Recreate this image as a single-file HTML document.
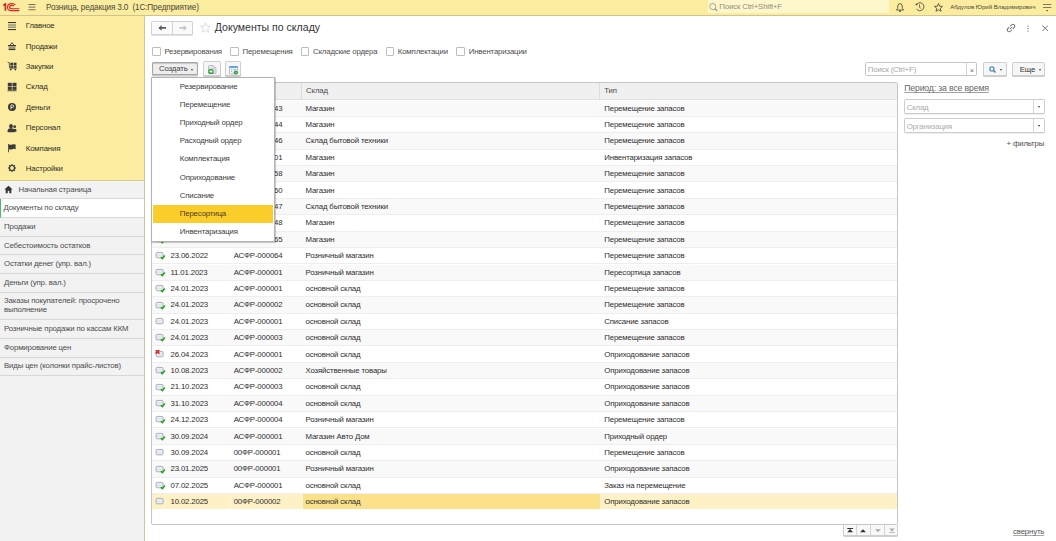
<!DOCTYPE html>
<html><head><meta charset="utf-8"><style>
*{box-sizing:border-box;margin:0;padding:0}
html,body{width:1056px;height:541px;overflow:hidden;background:#fff;font-family:"Liberation Sans",sans-serif;color:#2e2e2e;font-size:7.8px;letter-spacing:-0.15px}
.abs{position:absolute}
#hdr{position:absolute;left:0;top:0;width:1056px;height:16px;background:#FBEC9F;border-bottom:1px solid #CFC58C}
#logo{position:absolute;left:3px;top:3px}
#burger{position:absolute;left:28px;top:4px;width:8px;height:7px}
#apptitle{position:absolute;left:46px;top:2.7px;font-size:8.2px;color:#4a4a3a;white-space:pre}
#hsearch{position:absolute;left:708px;top:0;width:180.5px;height:13px;background:#FDF7CB}
#hsearch span{position:absolute;left:11.3px;top:1.8px;color:#8f8e80}
#user{position:absolute;left:950.3px;top:4.3px;font-size:6.05px;letter-spacing:0;-webkit-text-stroke:0;color:#4a4a3a;white-space:nowrap}
#side{position:absolute;left:0;top:16px;width:145px;height:525px;background:#F2F2F2;border-right:1px solid #CBC5A2}
#secs{position:absolute;left:0;top:0;width:144px;height:164.7px;background:#FBEC9F;border-bottom:1px solid #D3CA92;box-shadow:0 0.8px 0 #F7F7F7;z-index:2}
.sec{position:absolute;left:0;width:144px;height:12px;color:#2e2e2a}
.sec span{position:absolute;left:25.8px;top:1.6px;white-space:nowrap}
.si{position:absolute;left:7.7px;top:2px}
#tabs{position:absolute;left:0;top:0}
.tab{position:absolute;left:0;width:144px;border-bottom:1px solid #D8D8D8;background:#F2F2F2;color:#4d4d4d}
.tab span{position:absolute;left:4px;top:50%;margin-top:-5px;white-space:nowrap;line-height:9px}
.tab.two span{margin-top:-9px;line-height:8.9px}
.tab.act{background:#fff;border-left:1.5px solid #4CB86A}
.tab.act span{left:2.5px}
.tab.home span{left:18.5px;margin-top:-4.4px}
.homei{position:absolute;left:3.6px;top:4.6px}
#content{position:absolute;left:145px;top:16px;width:911px;height:525px;background:#fff}
#navbtn{position:absolute;left:151.4px;top:21px;width:41.6px;height:13.6px;border:1px solid #D2D2D2;border-radius:1.5px;background:#FAFAFA;box-shadow:0 0.6px 0 #C8C8C8}
#navbtn i{position:absolute;left:20px;top:0;width:1px;height:100%;background:#D2D2D2}
#title{position:absolute;left:214.8px;top:21.2px;letter-spacing:0;font-size:10.56px;color:#333;white-space:nowrap}
.chk{position:absolute;top:47.2px;height:9px;white-space:nowrap}
.chk i{position:absolute;left:0;top:0;width:8.6px;height:8.6px;border:1px solid #BDBDBD;border-radius:1px;background:#fff}
.chk span{position:absolute;left:12.3px;top:-0.3px;color:#4d4d4d}
.btn{position:absolute;border:1px solid #CFCFCF;border-radius:1.5px;background:#F6F6F6;box-shadow:0 0.7px 0 #BDBDBD}
#create{left:151.8px;top:61.6px;width:46.6px;height:13.4px;background:#EEEEEE;border:1.3px solid #A6A6A6;border-radius:1px;box-shadow:inset 0 0.8px 1px #bbb,0 1.6px 0.6px #CBCBCB}
#create span{position:absolute;left:6.2px;top:1px;color:#444}
.caret{position:absolute;width:0;height:0;border-left:1.9px solid transparent;border-right:1.9px solid transparent;border-top:2.1px solid #444}
#tbl{position:absolute;left:151px;top:82px;width:747px;height:442.5px;border:1px solid #C6C6C6;border-radius:1.5px;background:#fff;overflow:hidden}
#thead{position:absolute;left:0;top:0;width:100%;height:16.5px;background:#F0F0F0;border-bottom:1px solid #DEDEDE}
#thead div{position:absolute;top:0;height:16px;border-right:1px solid #DCDCDC}
#thead span{position:absolute;top:3.3px;color:#4d4d4d}
.r{position:absolute;left:0;width:100%;height:16.4px;background:#fff;border-bottom:1px solid #EEEEEE}
.r.odd{background:#F9F9F9}
.r > div{position:absolute;top:0;height:100%;white-space:nowrap}
.r span.dt{position:absolute;left:18.5px;top:3px}
.c0{left:0;width:77.5px}
.c1{left:77.5px;width:72px;padding-left:4.2px;padding-top:3px}
.c2{left:149.5px;width:298px;padding-left:4px;padding-top:3px}
.c3{left:447.5px;width:298px;padding-left:4.8px;padding-top:3px}
.di{position:absolute;left:3px;top:3.3px}
.r.sel{background:#FEF1C6;border-bottom-color:#fff}
.r.sel .c2{background:#FBE18A;border-left:1px solid #FFF7DF;padding-left:3px}
.r.sel .c1{border-left:1px solid #FFF8E0;padding-left:3.2px}
#menu{position:absolute;left:151.4px;top:76.8px;width:123.2px;height:165.2px;background:#fff;border:1px solid #B4B4B4;border-radius:1px;box-shadow:0.6px 0.8px 1px rgba(0,0,0,0.22)}
.mi{position:absolute;left:0;width:121px;height:18px;padding-left:27.4px;padding-top:3.3px;color:#404040;white-space:nowrap}
.mi.hl{background:#FACD2B;left:0.6px;width:120.2px;padding-left:26.8px;color:#4a4020}
#srch{position:absolute;left:865.2px;top:62px;width:112px;height:14.3px;border:1px solid #C6C6C6;border-radius:1.5px;background:#fff}
#srch span{position:absolute;left:1.6px;top:2.2px;color:#A8A8A8}
#srch i{position:absolute;left:99.6px;top:0;width:1px;height:100%;background:#D6D6D6}
#srch b{position:absolute;left:103.6px;top:2.6px;font-weight:normal;color:#666;font-size:7.4px}
#period{position:absolute;left:904.2px;top:83.4px;font-size:8.7px;color:#666;-webkit-text-stroke:0;text-decoration:underline;text-decoration-color:#a0a0a0;white-space:nowrap}
.fld{position:absolute;left:903.9px;width:141.3px;height:14px;border:1px solid #CCCCCC;border-radius:1.5px;background:#fff;box-shadow:0 0.5px 0 #E0E0E0}
.fld span{position:absolute;left:1.8px;top:2.4px;color:#ABABAB}
.fld i{position:absolute;left:127.8px;top:0;width:1px;height:100%;background:#D6D6D6}
#morefil{position:absolute;left:1006.5px;top:139px;color:#4d4d4d;white-space:nowrap}
#pager{position:absolute;left:843.3px;top:525px;width:54.7px;height:11.3px;border:1px solid #CFCFCF;border-top:none;border-radius:0 0 1.5px 1.5px;background:#F8F8F8;box-shadow:0 0.7px 0 #C4C4C4}
#pager i{position:absolute;top:0;width:1px;height:100%;background:#D4D4D4}
#collapse{position:absolute;left:1013px;top:527.3px;color:#555;-webkit-text-stroke:0;text-decoration:underline;text-decoration-color:#aaa;white-space:nowrap}
</style></head><body>
<div id="hdr">
  <svg id="logo" width="17" height="9" viewBox="0 0 17 9">
    <path d="M0.3 2.6 L2.4 0.8 L2.4 7.7" fill="none" stroke="#D8262B" stroke-width="1.7"/>
    <path d="M12.4 2 Q11.4 0.6 8.8 0.6 Q4.5 0.6 4.5 4.2 Q4.5 7.6 8.8 7.6 L16.3 7.6" fill="none" stroke="#D8262B" stroke-width="1.1"/>
    <path d="M10.8 3.1 Q10.3 2.4 8.9 2.4 Q6.5 2.4 6.5 4.1 Q6.5 5.8 8.9 5.8 L16.3 5.8" fill="none" stroke="#D8262B" stroke-width="1.1"/>
  </svg>
  <svg id="burger" width="8" height="8" viewBox="0 0 8 8"><rect x="0" y="0" width="8" height="1.1" fill="#6f6c58"/><rect x="0" y="3" width="8" height="1.1" fill="#6f6c58"/><rect x="0" y="6" width="8" height="1.1" fill="#6f6c58"/></svg>
  <div id="apptitle">Розница, редакция 3.0  (1С:Предприятие)</div>
  <div id="hsearch"><svg style="position:absolute;left:1px;top:3px" width="9" height="9" viewBox="0 0 9 9"><circle cx="3.8" cy="3.6" r="3.1" fill="none" stroke="#8f8e80" stroke-width="0.8"/><path d="M6 5.9 L8.3 8" stroke="#8f8e80" stroke-width="1.1"/></svg><span>Поиск Ctrl+Shift+F</span></div>
  <svg class="abs" style="left:896px;top:2.8px" width="8" height="9" viewBox="0 0 8 9"><path d="M4 0.6 Q2 0.6 1.8 3 L1.6 5.6 L0.4 7 L7.6 7 L6.4 5.6 L6.2 3 Q6 0.6 4 0.6 Z" fill="none" stroke="#3f3f35" stroke-width="0.8"/><rect x="3" y="7.5" width="2" height="1.2" fill="#3f3f35"/></svg>
  <svg class="abs" style="left:915px;top:2.3px" width="10" height="10" viewBox="0 0 10 10"><path d="M1.3 3 A4 4 0 1 1 1.6 7" fill="none" stroke="#3f3f35" stroke-width="0.8"/><path d="M0.2 2 L2.4 1.6 L1.9 3.8 Z" fill="#3f3f35"/><path d="M4.5 2.6 L4.6 5.2 L6 6.6" fill="none" stroke="#3f3f35" stroke-width="0.8"/></svg>
  <svg class="abs" style="left:934px;top:2.6px" width="9" height="9" viewBox="0 0 9 9"><path d="M4.5 0.5 L5.6 3.2 L8.5 3.4 L6.3 5.3 L7 8.3 L4.5 6.7 L2 8.3 L2.7 5.3 L0.5 3.4 L3.4 3.2 Z" fill="none" stroke="#3f3f35" stroke-width="0.8" stroke-linejoin="round"/></svg>
  <div id="user">Абдулов Юрий Владимирович</div>
  <svg class="abs" style="left:1042.8px;top:3.5px" width="9" height="8" viewBox="0 0 9 8"><rect x="0" y="0" width="8.3" height="1" fill="#7d7a60"/><rect x="0" y="3" width="8.3" height="1" fill="#7d7a60"/><path d="M3 6 L5.2 6 L4.1 7.2 Z" fill="#333"/></svg>
</div>
<div id="side">
  <div id="secs"><div class="sec" style="top:3.6px"><svg class="si" width="8" height="8" viewBox="0 0 8 8" overflow="visible"><rect x="0" y="0" width="8" height="1.1" fill="#3a3a3c"/><rect x="0" y="2.2" width="8" height="1.6" fill="#9B9A7C"/><rect x="0" y="4.4" width="8" height="1.6" fill="#9B9A7C"/><rect x="0" y="7" width="8" height="1.1" fill="#3a3a3c"/></svg><span>Главное</span></div><div class="sec" style="top:24.0px"><svg class="si" width="8" height="8" viewBox="0 0 8 8" overflow="visible"><path d="M2.2 3 L4 0.6 L5.8 3" fill="none" stroke="#3a3a3c" stroke-width="0.9"/><rect x="0" y="3" width="8" height="1.3" fill="#3a3a3c"/><rect x="0.6" y="4.3" width="6.8" height="2.6" fill="#9B9A7C"/><rect x="0.6" y="6.9" width="6.8" height="1.2" fill="#3a3a3c"/></svg><span>Продажи</span></div><div class="sec" style="top:44.4px"><svg class="si" width="8" height="8" viewBox="0 0 8 8" overflow="visible"><path d="M-0.4 0.2 L1.2 0.7 L1.6 6.2 L8.6 6.2" fill="none" stroke="#3a3a3c" stroke-width="0.8"/><rect x="2.3" y="0.7" width="2.8" height="2.4" fill="#3a3a3c"/><rect x="5.7" y="0.7" width="2.8" height="2.4" fill="#3a3a3c"/><rect x="2.3" y="3.5" width="2.8" height="2.3" fill="#3a3a3c"/><rect x="5.7" y="3.5" width="2.8" height="2.3" fill="#3a3a3c"/><circle cx="2.8" cy="7.6" r="0.9" fill="#3a3a3c"/><circle cx="7.4" cy="7.6" r="0.9" fill="#3a3a3c"/></svg><span>Закупки</span></div><div class="sec" style="top:64.8px"><svg class="si" width="8" height="8" viewBox="0 0 8 8" overflow="visible"><rect x="-0.2" y="-0.2" width="4" height="3.4" fill="#3a3a3c"/><rect x="4.5" y="-0.2" width="4" height="3.4" fill="#3a3a3c"/><rect x="-0.2" y="3.7" width="4" height="3.2" fill="#3a3a3c"/><rect x="4.5" y="3.7" width="4" height="3.2" fill="#3a3a3c"/><rect x="-0.4" y="7.3" width="8.9" height="0.9" fill="#3a3a3c"/></svg><span>Склад</span></div><div class="sec" style="top:85.2px"><svg class="si" width="8" height="8" viewBox="0 0 8 8" overflow="visible"><circle cx="4" cy="4" r="4" fill="#3a3a3c"/><path d="M3 6.2 L3 2 L4.6 2 Q5.8 2 5.8 3.2 Q5.8 4.4 4.6 4.4 L3 4.4" fill="none" stroke="#E8E4CC" stroke-width="1"/></svg><span>Деньги</span></div><div class="sec" style="top:105.6px"><svg class="si" width="8" height="8" viewBox="0 0 8 8" overflow="visible"><circle cx="6.7" cy="2.7" r="1.4" fill="#3a3a3c"/><path d="M5.2 8.1 L5.2 5.4 Q6.7 4.2 8.4 5.4 L8.4 7.8 Z" fill="#3a3a3c"/><ellipse cx="3" cy="2.2" rx="1.8" ry="2.2" fill="#3a3a3c"/><path d="M-0.4 8.2 L-0.4 6.6 Q-0.4 4.8 1.8 4.2 L4.2 4.2 Q6.4 4.8 6.4 6.6 L6.4 8.2 Z" fill="#3a3a3c"/></svg><span>Персонал</span></div><div class="sec" style="top:126.0px"><svg class="si" width="8" height="8" viewBox="0 0 8 8" overflow="visible"><rect x="0" y="0" width="1" height="8.2" fill="#55554a"/><path d="M1 0.4 Q2.6 1.2 4.2 0.5 Q5.8 -0.2 7.6 0.6 L7.6 5.2 Q6 4.5 4.2 5.2 Q2.6 5.9 1 5.2 Z" fill="#3a3a3c"/></svg><span>Компания</span></div><div class="sec" style="top:146.2px"><svg class="si" width="8" height="8" viewBox="0 0 8 8" overflow="visible"><g transform="translate(4 4)"><circle r="2.5" fill="none" stroke="#3a3a3c" stroke-width="1.2"/><rect x="-0.6" y="-4.1" width="1.2" height="1.8" fill="#3a3a3c" transform="rotate(0)"/><rect x="-0.6" y="-4.1" width="1.2" height="1.8" fill="#3a3a3c" transform="rotate(45)"/><rect x="-0.6" y="-4.1" width="1.2" height="1.8" fill="#3a3a3c" transform="rotate(90)"/><rect x="-0.6" y="-4.1" width="1.2" height="1.8" fill="#3a3a3c" transform="rotate(135)"/><rect x="-0.6" y="-4.1" width="1.2" height="1.8" fill="#3a3a3c" transform="rotate(180)"/><rect x="-0.6" y="-4.1" width="1.2" height="1.8" fill="#3a3a3c" transform="rotate(225)"/><rect x="-0.6" y="-4.1" width="1.2" height="1.8" fill="#3a3a3c" transform="rotate(270)"/><rect x="-0.6" y="-4.1" width="1.2" height="1.8" fill="#3a3a3c" transform="rotate(315)"/></g></svg><span>Настройки</span></div></div>
  <div id="tabs"><div class="tab home" style="top:164.00px;height:19.30px"><svg class="homei" width="9" height="9" viewBox="0 0 9 9"><path d="M4.5 0.8 L8.6 4.6 L7.3 4.6 L7.3 8.2 L5.3 8.2 L5.3 5.8 L3.7 5.8 L3.7 8.2 L1.7 8.2 L1.7 4.6 L0.4 4.6 Z" fill="#333"/></svg><span>Начальная страница</span></div><div class="tab act" style="top:183.30px;height:18.90px"><span>Документы по складу</span></div><div class="tab" style="top:202.20px;height:18.60px"><span>Продажи</span></div><div class="tab" style="top:220.80px;height:18.70px"><span>Себестоимость остатков</span></div><div class="tab" style="top:239.50px;height:18.80px"><span>Остатки денег (упр. вал.)</span></div><div class="tab" style="top:258.30px;height:18.80px"><span>Деньги (упр. вал.)</span></div><div class="tab two" style="top:277.10px;height:26.80px"><span>Заказы покупателей: просрочено<br>выполнение</span></div><div class="tab" style="top:303.90px;height:19.10px"><span>Розничные продажи по кассам ККМ</span></div><div class="tab" style="top:323.00px;height:18.60px"><span>Формирование цен</span></div><div class="tab" style="top:341.60px;height:18.60px"><span>Виды цен (колонки прайс-листов)</span></div></div>
</div>
<div id="content"></div>
<div id="navbtn"><i></i>
  <svg class="abs" style="left:5.5px;top:3px" width="9" height="7" viewBox="0 0 9 7"><path d="M0.3 2.9 L3.6 0.1 L3.6 2 L8.1 2 L8.1 3.8 L3.6 3.8 L3.6 5.7 Z" fill="#5a5a5a"/></svg>
  <svg class="abs" style="left:26.6px;top:3px" width="9" height="7" viewBox="0 0 9 7"><path d="M7.9 2.9 L4.6 0.1 L4.6 2 L0.2 2 L0.2 3.8 L4.6 3.8 L4.6 5.7 Z" fill="#C4C4C4"/></svg>
</div>
<svg class="abs" style="left:199.6px;top:22.4px" width="11" height="11" viewBox="0 0 11 11"><path d="M5.5 0.6 L6.8 4 L10.4 4.2 L7.7 6.6 L8.6 10.3 L5.5 8.2 L2.4 10.3 L3.3 6.6 L0.6 4.2 L4.2 4 Z" fill="none" stroke="#D6D6D6" stroke-width="0.8" stroke-linejoin="round"/></svg>
<div id="title">Документы по складу</div>
<svg class="abs" style="left:1005.6px;top:22.8px" width="10" height="10" viewBox="0 0 10 10"><g fill="none" stroke="#6e6e6e" stroke-width="0.95" stroke-linecap="round"><path transform="translate(6.6 3.4) rotate(45)" d="M-1.8 1.3 L-1.8 -0.5 A1.8 1.8 0 0 1 1.8 -0.5 L1.8 1.3"/><path transform="translate(3.4 6.6) rotate(45)" d="M-1.8 -1.3 L-1.8 0.5 A1.8 1.8 0 0 0 1.8 0.5 L1.8 -1.3"/><path d="M4.1 5.9 L5.9 4.1"/></g></svg>
<svg class="abs" style="left:1026.5px;top:24.6px" width="2" height="7" viewBox="0 0 2 7"><circle cx="1" cy="1" r="0.62" fill="#444"/><circle cx="1" cy="3.5" r="0.62" fill="#444"/><circle cx="1" cy="6" r="0.62" fill="#444"/></svg>
<svg class="abs" style="left:1041.7px;top:24.6px" width="6.5" height="6.5" viewBox="0 0 6.5 6.5"><path d="M0.3 0.3 L6.2 6.2 M6.2 0.3 L0.3 6.2" stroke="#555" stroke-width="0.8"/></svg>
<div class="chk" style="left:152.1px"><i></i><span>Резервирования</span></div><div class="chk" style="left:230.2px"><i></i><span>Перемещения</span></div><div class="chk" style="left:300.7px"><i></i><span>Складские ордера</span></div><div class="chk" style="left:385.5px"><i></i><span>Комплектации</span></div><div class="chk" style="left:456.4px"><i></i><span>Инвентаризации</span></div>
<div id="tbl">
  <div id="thead">
    <div style="left:0;width:77.5px"></div>
    <div style="left:77.5px;width:72px"></div>
    <div style="left:149.5px;width:298px"><span style="left:4.6px">Склад</span></div>
    <div style="left:447.5px;width:298px;border-right:none"><span style="left:4.8px">Тип</span></div>
  </div>
  <div class="r odd" style="top:17.50px"><div class="c0"><svg class="di" width="13" height="12" viewBox="0 0 13 12"><rect x="1.1" y="1.4" width="7" height="5.4" rx="1.1" fill="#E6E9EE" stroke="#A7AFBC" stroke-width="1"/><rect x="2.4" y="2.6" width="4.4" height="3" fill="#F2F4F7"/><line x1="2.6" y1="4.1" x2="6.6" y2="4.1" stroke="#C3C9D3" stroke-width="0.6"/><path d="M5.9 6.2 L7.4 7.6 L9.9 4.6" fill="none" stroke="#27A427" stroke-width="1.6"/></svg><span class="dt">10.06.2022</span></div><div class="c1">АСФР-000043</div><div class="c2">Магазин</div><div class="c3">Перемещение запасов</div></div><div class="r" style="top:33.90px"><div class="c0"><svg class="di" width="13" height="12" viewBox="0 0 13 12"><rect x="1.1" y="1.4" width="7" height="5.4" rx="1.1" fill="#E6E9EE" stroke="#A7AFBC" stroke-width="1"/><rect x="2.4" y="2.6" width="4.4" height="3" fill="#F2F4F7"/><line x1="2.6" y1="4.1" x2="6.6" y2="4.1" stroke="#C3C9D3" stroke-width="0.6"/><path d="M5.9 6.2 L7.4 7.6 L9.9 4.6" fill="none" stroke="#27A427" stroke-width="1.6"/></svg><span class="dt">10.06.2022</span></div><div class="c1">АСФР-000044</div><div class="c2">Магазин</div><div class="c3">Перемещение запасов</div></div><div class="r odd" style="top:50.30px"><div class="c0"><svg class="di" width="13" height="12" viewBox="0 0 13 12"><rect x="1.1" y="1.4" width="7" height="5.4" rx="1.1" fill="#E6E9EE" stroke="#A7AFBC" stroke-width="1"/><rect x="2.4" y="2.6" width="4.4" height="3" fill="#F2F4F7"/><line x1="2.6" y1="4.1" x2="6.6" y2="4.1" stroke="#C3C9D3" stroke-width="0.6"/><path d="M5.9 6.2 L7.4 7.6 L9.9 4.6" fill="none" stroke="#27A427" stroke-width="1.6"/></svg><span class="dt">10.06.2022</span></div><div class="c1">АСФР-000046</div><div class="c2">Склад бытовой техники</div><div class="c3">Перемещение запасов</div></div><div class="r" style="top:66.70px"><div class="c0"><svg class="di" width="13" height="12" viewBox="0 0 13 12"><rect x="1.1" y="1.4" width="7" height="5.4" rx="1.1" fill="#E6E9EE" stroke="#A7AFBC" stroke-width="1"/><rect x="2.4" y="2.6" width="4.4" height="3" fill="#F2F4F7"/><line x1="2.6" y1="4.1" x2="6.6" y2="4.1" stroke="#C3C9D3" stroke-width="0.6"/><path d="M5.9 6.2 L7.4 7.6 L9.9 4.6" fill="none" stroke="#27A427" stroke-width="1.6"/></svg><span class="dt">10.06.2022</span></div><div class="c1">АСФР-000001</div><div class="c2">Магазин</div><div class="c3">Инвентаризация запасов</div></div><div class="r odd" style="top:83.10px"><div class="c0"><svg class="di" width="13" height="12" viewBox="0 0 13 12"><rect x="1.1" y="1.4" width="7" height="5.4" rx="1.1" fill="#E6E9EE" stroke="#A7AFBC" stroke-width="1"/><rect x="2.4" y="2.6" width="4.4" height="3" fill="#F2F4F7"/><line x1="2.6" y1="4.1" x2="6.6" y2="4.1" stroke="#C3C9D3" stroke-width="0.6"/><path d="M5.9 6.2 L7.4 7.6 L9.9 4.6" fill="none" stroke="#27A427" stroke-width="1.6"/></svg><span class="dt">10.06.2022</span></div><div class="c1">АСФР-000058</div><div class="c2">Магазин</div><div class="c3">Перемещение запасов</div></div><div class="r" style="top:99.50px"><div class="c0"><svg class="di" width="13" height="12" viewBox="0 0 13 12"><rect x="1.1" y="1.4" width="7" height="5.4" rx="1.1" fill="#E6E9EE" stroke="#A7AFBC" stroke-width="1"/><rect x="2.4" y="2.6" width="4.4" height="3" fill="#F2F4F7"/><line x1="2.6" y1="4.1" x2="6.6" y2="4.1" stroke="#C3C9D3" stroke-width="0.6"/><path d="M5.9 6.2 L7.4 7.6 L9.9 4.6" fill="none" stroke="#27A427" stroke-width="1.6"/></svg><span class="dt">10.06.2022</span></div><div class="c1">АСФР-000060</div><div class="c2">Магазин</div><div class="c3">Перемещение запасов</div></div><div class="r odd" style="top:115.90px"><div class="c0"><svg class="di" width="13" height="12" viewBox="0 0 13 12"><rect x="1.1" y="1.4" width="7" height="5.4" rx="1.1" fill="#E6E9EE" stroke="#A7AFBC" stroke-width="1"/><rect x="2.4" y="2.6" width="4.4" height="3" fill="#F2F4F7"/><line x1="2.6" y1="4.1" x2="6.6" y2="4.1" stroke="#C3C9D3" stroke-width="0.6"/><path d="M5.9 6.2 L7.4 7.6 L9.9 4.6" fill="none" stroke="#27A427" stroke-width="1.6"/></svg><span class="dt">10.06.2022</span></div><div class="c1">АСФР-000047</div><div class="c2">Склад бытовой техники</div><div class="c3">Перемещение запасов</div></div><div class="r" style="top:132.30px"><div class="c0"><svg class="di" width="13" height="12" viewBox="0 0 13 12"><rect x="1.1" y="1.4" width="7" height="5.4" rx="1.1" fill="#E6E9EE" stroke="#A7AFBC" stroke-width="1"/><rect x="2.4" y="2.6" width="4.4" height="3" fill="#F2F4F7"/><line x1="2.6" y1="4.1" x2="6.6" y2="4.1" stroke="#C3C9D3" stroke-width="0.6"/><path d="M5.9 6.2 L7.4 7.6 L9.9 4.6" fill="none" stroke="#27A427" stroke-width="1.6"/></svg><span class="dt">10.06.2022</span></div><div class="c1">АСФР-000048</div><div class="c2">Магазин</div><div class="c3">Перемещение запасов</div></div><div class="r odd" style="top:148.70px"><div class="c0"><svg class="di" width="13" height="12" viewBox="0 0 13 12"><rect x="1.1" y="1.4" width="7" height="5.4" rx="1.1" fill="#E6E9EE" stroke="#A7AFBC" stroke-width="1"/><rect x="2.4" y="2.6" width="4.4" height="3" fill="#F2F4F7"/><line x1="2.6" y1="4.1" x2="6.6" y2="4.1" stroke="#C3C9D3" stroke-width="0.6"/><path d="M5.9 6.2 L7.4 7.6 L9.9 4.6" fill="none" stroke="#27A427" stroke-width="1.6"/></svg><span class="dt">10.06.2022</span></div><div class="c1">АСФР-000065</div><div class="c2">Магазин</div><div class="c3">Перемещение запасов</div></div><div class="r" style="top:165.10px"><div class="c0"><svg class="di" width="13" height="12" viewBox="0 0 13 12"><rect x="1.1" y="1.4" width="7" height="5.4" rx="1.1" fill="#E6E9EE" stroke="#A7AFBC" stroke-width="1"/><rect x="2.4" y="2.6" width="4.4" height="3" fill="#F2F4F7"/><line x1="2.6" y1="4.1" x2="6.6" y2="4.1" stroke="#C3C9D3" stroke-width="0.6"/><path d="M5.9 6.2 L7.4 7.6 L9.9 4.6" fill="none" stroke="#27A427" stroke-width="1.6"/></svg><span class="dt">23.06.2022</span></div><div class="c1">АСФР-000064</div><div class="c2">Розничный магазин</div><div class="c3">Перемещение запасов</div></div><div class="r odd" style="top:181.50px"><div class="c0"><svg class="di" width="13" height="12" viewBox="0 0 13 12"><rect x="1.1" y="1.4" width="7" height="5.4" rx="1.1" fill="#E6E9EE" stroke="#A7AFBC" stroke-width="1"/><rect x="2.4" y="2.6" width="4.4" height="3" fill="#F2F4F7"/><line x1="2.6" y1="4.1" x2="6.6" y2="4.1" stroke="#C3C9D3" stroke-width="0.6"/><path d="M5.9 6.2 L7.4 7.6 L9.9 4.6" fill="none" stroke="#27A427" stroke-width="1.6"/></svg><span class="dt">11.01.2023</span></div><div class="c1">АСФР-000001</div><div class="c2">Розничный магазин</div><div class="c3">Пересортица запасов</div></div><div class="r" style="top:197.90px"><div class="c0"><svg class="di" width="13" height="12" viewBox="0 0 13 12"><rect x="1.1" y="1.4" width="7" height="5.4" rx="1.1" fill="#E6E9EE" stroke="#A7AFBC" stroke-width="1"/><rect x="2.4" y="2.6" width="4.4" height="3" fill="#F2F4F7"/><line x1="2.6" y1="4.1" x2="6.6" y2="4.1" stroke="#C3C9D3" stroke-width="0.6"/><path d="M5.9 6.2 L7.4 7.6 L9.9 4.6" fill="none" stroke="#27A427" stroke-width="1.6"/></svg><span class="dt">24.01.2023</span></div><div class="c1">АСФР-000001</div><div class="c2">основной склад</div><div class="c3">Перемещение запасов</div></div><div class="r odd" style="top:214.30px"><div class="c0"><svg class="di" width="13" height="12" viewBox="0 0 13 12"><rect x="1.1" y="1.4" width="7" height="5.4" rx="1.1" fill="#E6E9EE" stroke="#A7AFBC" stroke-width="1"/><rect x="2.4" y="2.6" width="4.4" height="3" fill="#F2F4F7"/><line x1="2.6" y1="4.1" x2="6.6" y2="4.1" stroke="#C3C9D3" stroke-width="0.6"/><path d="M5.9 6.2 L7.4 7.6 L9.9 4.6" fill="none" stroke="#27A427" stroke-width="1.6"/></svg><span class="dt">24.01.2023</span></div><div class="c1">АСФР-000002</div><div class="c2">основной склад</div><div class="c3">Перемещение запасов</div></div><div class="r" style="top:230.70px"><div class="c0"><svg class="di" width="13" height="12" viewBox="0 0 13 12"><rect x="1.1" y="1.4" width="7" height="5.4" rx="1.1" fill="#E6E9EE" stroke="#A7AFBC" stroke-width="1"/><rect x="2.4" y="2.6" width="4.4" height="3" fill="#F2F4F7"/><line x1="2.6" y1="4.1" x2="6.6" y2="4.1" stroke="#C3C9D3" stroke-width="0.6"/></svg><span class="dt">24.01.2023</span></div><div class="c1">АСФР-000001</div><div class="c2">основной склад</div><div class="c3">Списание запасов</div></div><div class="r odd" style="top:247.10px"><div class="c0"><svg class="di" width="13" height="12" viewBox="0 0 13 12"><rect x="1.1" y="1.4" width="7" height="5.4" rx="1.1" fill="#E6E9EE" stroke="#A7AFBC" stroke-width="1"/><rect x="2.4" y="2.6" width="4.4" height="3" fill="#F2F4F7"/><line x1="2.6" y1="4.1" x2="6.6" y2="4.1" stroke="#C3C9D3" stroke-width="0.6"/><path d="M5.9 6.2 L7.4 7.6 L9.9 4.6" fill="none" stroke="#27A427" stroke-width="1.6"/></svg><span class="dt">24.01.2023</span></div><div class="c1">АСФР-000003</div><div class="c2">основной склад</div><div class="c3">Перемещение запасов</div></div><div class="r" style="top:263.50px"><div class="c0"><svg class="di" width="13" height="12" viewBox="0 0 13 12"><rect x="1.1" y="1.4" width="7" height="5.4" rx="1.1" fill="#E6E9EE" stroke="#A7AFBC" stroke-width="1"/><rect x="2.4" y="2.6" width="4.4" height="3" fill="#F2F4F7"/><line x1="2.6" y1="4.1" x2="6.6" y2="4.1" stroke="#C3C9D3" stroke-width="0.6"/><path d="M0.6 -0.2 L4.4 3.6 M4.4 -0.2 L0.6 3.6" stroke="#E0282A" stroke-width="1.6"/></svg><span class="dt">26.04.2023</span></div><div class="c1">АСФР-000001</div><div class="c2">основной склад</div><div class="c3">Оприходование запасов</div></div><div class="r odd" style="top:279.90px"><div class="c0"><svg class="di" width="13" height="12" viewBox="0 0 13 12"><rect x="1.1" y="1.4" width="7" height="5.4" rx="1.1" fill="#E6E9EE" stroke="#A7AFBC" stroke-width="1"/><rect x="2.4" y="2.6" width="4.4" height="3" fill="#F2F4F7"/><line x1="2.6" y1="4.1" x2="6.6" y2="4.1" stroke="#C3C9D3" stroke-width="0.6"/><path d="M5.9 6.2 L7.4 7.6 L9.9 4.6" fill="none" stroke="#27A427" stroke-width="1.6"/></svg><span class="dt">10.08.2023</span></div><div class="c1">АСФР-000002</div><div class="c2">Хозяйственные товары</div><div class="c3">Оприходование запасов</div></div><div class="r" style="top:296.30px"><div class="c0"><svg class="di" width="13" height="12" viewBox="0 0 13 12"><rect x="1.1" y="1.4" width="7" height="5.4" rx="1.1" fill="#E6E9EE" stroke="#A7AFBC" stroke-width="1"/><rect x="2.4" y="2.6" width="4.4" height="3" fill="#F2F4F7"/><line x1="2.6" y1="4.1" x2="6.6" y2="4.1" stroke="#C3C9D3" stroke-width="0.6"/><path d="M5.9 6.2 L7.4 7.6 L9.9 4.6" fill="none" stroke="#27A427" stroke-width="1.6"/></svg><span class="dt">21.10.2023</span></div><div class="c1">АСФР-000003</div><div class="c2">основной склад</div><div class="c3">Оприходование запасов</div></div><div class="r odd" style="top:312.70px"><div class="c0"><svg class="di" width="13" height="12" viewBox="0 0 13 12"><rect x="1.1" y="1.4" width="7" height="5.4" rx="1.1" fill="#E6E9EE" stroke="#A7AFBC" stroke-width="1"/><rect x="2.4" y="2.6" width="4.4" height="3" fill="#F2F4F7"/><line x1="2.6" y1="4.1" x2="6.6" y2="4.1" stroke="#C3C9D3" stroke-width="0.6"/><path d="M5.9 6.2 L7.4 7.6 L9.9 4.6" fill="none" stroke="#27A427" stroke-width="1.6"/></svg><span class="dt">31.10.2023</span></div><div class="c1">АСФР-000004</div><div class="c2">основной склад</div><div class="c3">Оприходование запасов</div></div><div class="r" style="top:329.10px"><div class="c0"><svg class="di" width="13" height="12" viewBox="0 0 13 12"><rect x="1.1" y="1.4" width="7" height="5.4" rx="1.1" fill="#E6E9EE" stroke="#A7AFBC" stroke-width="1"/><rect x="2.4" y="2.6" width="4.4" height="3" fill="#F2F4F7"/><line x1="2.6" y1="4.1" x2="6.6" y2="4.1" stroke="#C3C9D3" stroke-width="0.6"/><path d="M5.9 6.2 L7.4 7.6 L9.9 4.6" fill="none" stroke="#27A427" stroke-width="1.6"/></svg><span class="dt">24.12.2023</span></div><div class="c1">АСФР-000004</div><div class="c2">Розничный магазин</div><div class="c3">Перемещение запасов</div></div><div class="r odd" style="top:345.50px"><div class="c0"><svg class="di" width="13" height="12" viewBox="0 0 13 12"><rect x="1.1" y="1.4" width="7" height="5.4" rx="1.1" fill="#E6E9EE" stroke="#A7AFBC" stroke-width="1"/><rect x="2.4" y="2.6" width="4.4" height="3" fill="#F2F4F7"/><line x1="2.6" y1="4.1" x2="6.6" y2="4.1" stroke="#C3C9D3" stroke-width="0.6"/><path d="M5.9 6.2 L7.4 7.6 L9.9 4.6" fill="none" stroke="#27A427" stroke-width="1.6"/></svg><span class="dt">30.09.2024</span></div><div class="c1">АСФР-000001</div><div class="c2">Магазин Авто Дом</div><div class="c3">Приходный ордер</div></div><div class="r" style="top:361.90px"><div class="c0"><svg class="di" width="13" height="12" viewBox="0 0 13 12"><rect x="1.1" y="1.4" width="7" height="5.4" rx="1.1" fill="#E6E9EE" stroke="#A7AFBC" stroke-width="1"/><rect x="2.4" y="2.6" width="4.4" height="3" fill="#F2F4F7"/><line x1="2.6" y1="4.1" x2="6.6" y2="4.1" stroke="#C3C9D3" stroke-width="0.6"/></svg><span class="dt">30.09.2024</span></div><div class="c1">00ФР-000001</div><div class="c2">основной склад</div><div class="c3">Перемещение запасов</div></div><div class="r odd" style="top:378.30px"><div class="c0"><svg class="di" width="13" height="12" viewBox="0 0 13 12"><rect x="1.1" y="1.4" width="7" height="5.4" rx="1.1" fill="#E6E9EE" stroke="#A7AFBC" stroke-width="1"/><rect x="2.4" y="2.6" width="4.4" height="3" fill="#F2F4F7"/><line x1="2.6" y1="4.1" x2="6.6" y2="4.1" stroke="#C3C9D3" stroke-width="0.6"/><path d="M5.9 6.2 L7.4 7.6 L9.9 4.6" fill="none" stroke="#27A427" stroke-width="1.6"/></svg><span class="dt">23.01.2025</span></div><div class="c1">00ФР-000001</div><div class="c2">Розничный магазин</div><div class="c3">Оприходование запасов</div></div><div class="r" style="top:394.70px"><div class="c0"><svg class="di" width="13" height="12" viewBox="0 0 13 12"><rect x="1.1" y="1.4" width="7" height="5.4" rx="1.1" fill="#E6E9EE" stroke="#A7AFBC" stroke-width="1"/><rect x="2.4" y="2.6" width="4.4" height="3" fill="#F2F4F7"/><line x1="2.6" y1="4.1" x2="6.6" y2="4.1" stroke="#C3C9D3" stroke-width="0.6"/><path d="M5.9 6.2 L7.4 7.6 L9.9 4.6" fill="none" stroke="#27A427" stroke-width="1.6"/></svg><span class="dt">07.02.2025</span></div><div class="c1">АСФР-000001</div><div class="c2">основной склад</div><div class="c3">Заказ на перемещение</div></div><div class="r odd sel" style="top:411.10px"><div class="c0"><svg class="di" width="13" height="12" viewBox="0 0 13 12"><rect x="1.1" y="1.4" width="7" height="5.4" rx="1.1" fill="#E6E9EE" stroke="#A7AFBC" stroke-width="1"/><rect x="2.4" y="2.6" width="4.4" height="3" fill="#F2F4F7"/><line x1="2.6" y1="4.1" x2="6.6" y2="4.1" stroke="#C3C9D3" stroke-width="0.6"/></svg><span class="dt">10.02.2025</span></div><div class="c1">00ФР-000002</div><div class="c2">основной склад</div><div class="c3">Оприходование запасов</div></div>
</div>
<div class="btn" id="create"><span>Создать</span><i class="caret" style="left:38.6px;top:6.1px;border-left-width:1.9px;border-right-width:1.9px;border-top-width:2.1px"></i></div>
<div class="btn" style="left:203.4px;top:61.4px;width:17.3px;height:14.6px">
  <svg class="abs" style="left:3.5px;top:2.6px" width="10" height="10" viewBox="0 0 10 10"><path d="M0.5 1.4 Q0.5 0.4 1.5 0.4 L5.2 0.4 L7.9 3.2 L7.9 8 Q7.9 8.6 7.3 8.6 L1.1 8.6 Q0.5 8.6 0.5 8 Z" fill="#E3E7EE" stroke="#A3ABB9" stroke-width="0.8"/><path d="M5 0.6 L5 3.3 L7.8 3.3" fill="none" stroke="#B8BFCB" stroke-width="0.6"/><circle cx="3" cy="6.4" r="2.7" fill="#2CA23A"/><path d="M3 4.9 L3 7.9 M1.5 6.4 L4.5 6.4" stroke="#fff" stroke-width="1"/></svg>
</div>
<div class="btn" style="left:225.1px;top:61.4px;width:16.4px;height:14.6px">
  <svg class="abs" style="left:3.1px;top:3.3px" width="10" height="10" viewBox="0 0 10 10"><rect x="0.4" y="0.4" width="8.2" height="7.6" rx="0.8" fill="#EEF1F6" stroke="#A3ABB9" stroke-width="0.7"/><rect x="0.2" y="0.2" width="8.6" height="1.6" rx="0.6" fill="#3D93E0"/><path d="M2 3.6 L3.2 3.6 M4.4 3.6 L7.2 3.6 M2 5.4 L3.2 5.4" stroke="#8FA0BA" stroke-width="0.7"/><circle cx="6.8" cy="6.5" r="2.1" fill="#2CA23A"/><rect x="6" y="5.8" width="1.6" height="1.4" fill="#7ACB84"/></svg>
</div>
<div id="menu"><div class="mi" style="top:1.00px">Резервирование</div><div class="mi" style="top:19.10px">Перемещение</div><div class="mi" style="top:37.20px">Приходный ордер</div><div class="mi" style="top:55.30px">Расходный ордер</div><div class="mi" style="top:73.40px">Комплектация</div><div class="mi" style="top:91.50px">Оприходование</div><div class="mi" style="top:109.60px">Списание</div><div class="mi hl" style="top:127.70px">Пересортица</div><div class="mi" style="top:145.80px">Инвентаризация</div></div>
<div id="srch"><span>Поиск (Ctrl+F)</span><i></i><b>×</b></div>
<div class="btn" style="left:983.4px;top:62px;width:23.2px;height:14.2px">
  <svg class="abs" style="left:4.6px;top:3.2px" width="7" height="7" viewBox="0 0 7 7"><circle cx="2.9" cy="2.9" r="2.1" fill="none" stroke="#3A7FC4" stroke-width="1.1"/><path d="M4.5 4.5 L6.5 6.5" stroke="#3A7FC4" stroke-width="1.4"/></svg>
  <i class="caret" style="left:15.4px;top:6.3px"></i>
</div>
<div class="btn" style="left:1012.2px;top:62px;width:32.8px;height:14.2px"><span style="position:absolute;left:6.6px;top:2.4px;color:#333">Еще</span><i class="caret" style="left:25.4px;top:6.3px"></i></div>
<div id="period">Период: за все время</div>
<div class="fld" style="top:99.4px;height:14.6px"><span>Склад</span><i></i><i class="caret" style="left:133.2px;top:5.4px;background:none;width:0;height:0;border-top-color:#333"></i></div>
<div class="fld" style="top:118.4px;height:14.4px"><span>Организация</span><i></i><i class="caret" style="left:133.2px;top:5.4px;background:none;width:0;height:0;border-top-color:#333"></i></div>
<div id="morefil">+ фильтры</div>
<div id="pager"><i style="left:12.2px"></i><i style="left:26.2px"></i><i style="left:40.1px"></i>
  <svg class="abs" style="left:2.6px;top:2.9px" width="7" height="5" viewBox="0 0 7 5"><path d="M0.3 0.1 L6 0.1 L6 0.9 L0.3 0.9 Z M3.15 1 L6 4.3 L0.3 4.3 Z" fill="#333"/></svg>
  <svg class="abs" style="left:16.2px;top:3.9px" width="7" height="4" viewBox="0 0 7 4"><path d="M3 0.3 L6 3.2 L0 3.2 Z" fill="#333"/></svg>
  <svg class="abs" style="left:30.4px;top:3.6px" width="7" height="4" viewBox="0 0 7 4"><path d="M2.9 3.3 L5.8 0.3 L0 0.3 Z" fill="#A8A8A8"/></svg>
  <svg class="abs" style="left:44.4px;top:2.9px" width="7" height="5" viewBox="0 0 7 5"><path d="M0.3 0.4 L5.8 0.4 L3.05 3.5 Z M0.3 3.9 L5.8 3.9 L5.8 4.7 L0.3 4.7 Z" fill="#A8A8A8"/></svg>
</div>
<div id="collapse">свернуть</div>
</body></html>
